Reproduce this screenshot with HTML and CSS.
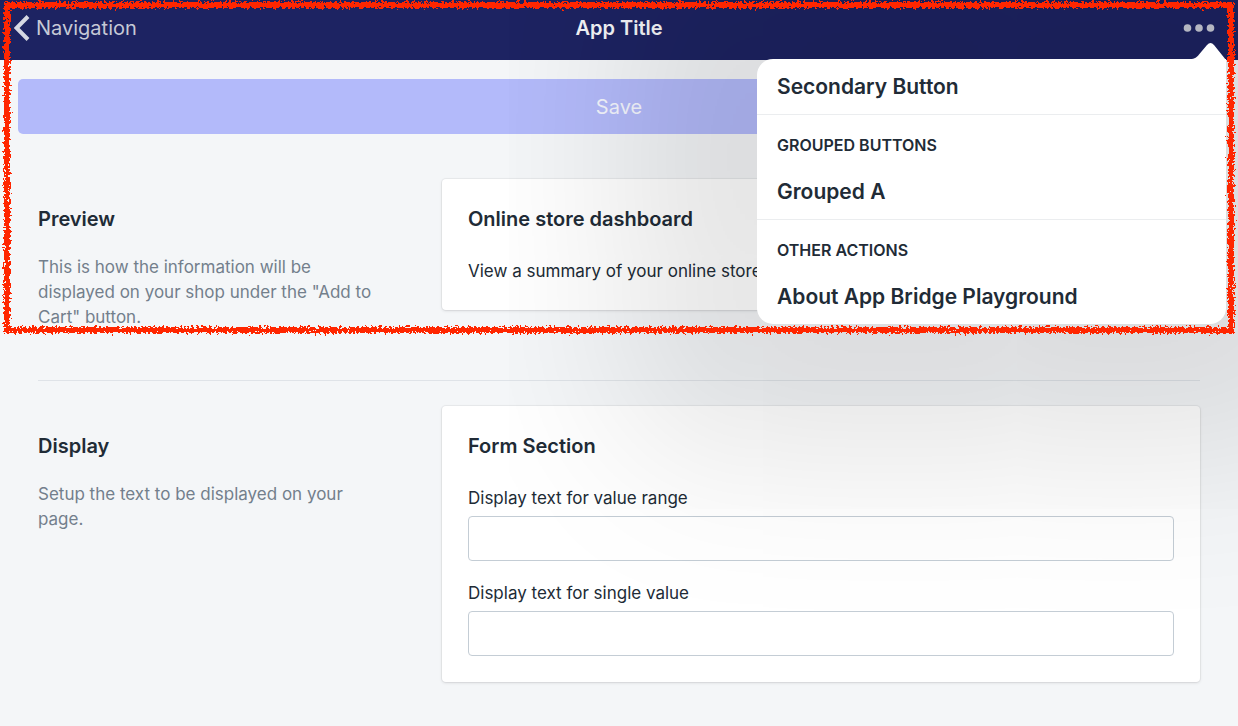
FILE: index.html
```html
<!DOCTYPE html>
<html lang="en">
<head>
<meta charset="utf-8">
<meta name="viewport" content="width=device-width, initial-scale=1">
<title>App Title</title>
<link rel="stylesheet" href="styles.css">
</head>
<body>
<div class="app">
  <header class="topbar">
    <a class="back" href="#">
      <svg class="back-icon" viewBox="0 0 16 28" aria-hidden="true"><path d="M14 2.5 2.6 14 14 25.5"/></svg>
      <span>Navigation</span>
    </a>
    <h1 class="title">App Title</h1>
    <div class="actions">
      <button class="more" type="button" aria-label="More actions" aria-expanded="true">
        <svg class="more-icon" viewBox="0 0 32 8" aria-hidden="true"><circle cx="4.5" cy="4" r="3.8"/><circle cx="16" cy="4" r="3.8"/><circle cx="27.5" cy="4" r="3.8"/></svg>
      </button>
      <div class="menu">
        <svg class="menu-arrow" viewBox="0 0 40 20" aria-hidden="true"><path d="M0 17C5 17 7 15 9 12.5L17 3Q20.500 -1 24 3L36 18V20H0Z"/></svg>
        <section class="menu-group">
          <button class="menu-item" type="button">Secondary Button</button>
        </section>
        <section class="menu-group">
          <h2 class="menu-heading">GROUPED BUTTONS</h2>
          <button class="menu-item" type="button">Grouped A</button>
        </section>
        <section class="menu-group">
          <h2 class="menu-heading">OTHER ACTIONS</h2>
          <button class="menu-item" type="button">About App Bridge Playground</button>
        </section>
      </div>
    </div>
  </header>

  <main>
    <div class="save-row"><button class="save" type="button">Save</button></div>

    <div class="sections">
      <section class="section">
        <div class="intro">
          <h2 class="heading">Preview</h2>
          <p class="description">This is how the information will be displayed on your shop under the "Add to Cart" button.</p>
        </div>
        <div class="card">
          <h3 class="heading">Online store dashboard</h3>
          <p class="card-text">View a summary of your online store</p>
        </div>
      </section>

      <section class="section section-divided">
        <div class="intro">
          <h2 class="heading">Display</h2>
          <p class="description">Setup the text to be displayed on your page.</p>
        </div>
        <form class="card">
          <h3 class="heading">Form Section</h3>
          <div class="fields">
            <div class="field">
              <label for="range">Display text for value range</label>
              <input id="range" type="text">
            </div>
            <div class="field">
              <label for="single">Display text for single value</label>
              <input id="single" type="text">
            </div>
          </div>
        </form>
      </section>
    </div>
  </main>

  <svg class="marker" aria-hidden="true">
    <defs>
      <filter id="crayon" x="-10" y="-10" width="105%" height="110%" filterUnits="userSpaceOnUse">
        <feTurbulence type="fractalNoise" baseFrequency="0.4" numOctaves="3" seed="4" result="noise"/>
        <feDisplacementMap in="SourceGraphic" in2="noise" scale="8" xChannelSelector="R" yChannelSelector="G"/>
      </filter>
    </defs>
    <rect class="marker-line" x="5" y="5" width="100%" height="325"/>
  </svg>
</div>
</body>
</html>
```
FILE: styles.css
```css
* { box-sizing: border-box; }

body {
  margin: 0;
  background: #f4f6f8;
  color: #212b36;
  font-family: Inter, "Liberation Sans", sans-serif;
}

h1, h2, h3, p { margin: 0; }

button { border: 0; font: inherit; cursor: pointer; }

.app {
  position: relative;
  min-height: 100vh;
  overflow: hidden;
}

.topbar {
  display: grid;
  grid-template-columns: 1fr auto 1fr;
  height: 60px;
  padding: 0 14px 5px;
  align-items: center;
  background: #1d2362;
}

.back {
  display: flex;
  align-items: center;
  gap: 6px;
  color: #c6c9d6;
  font-size: 20px;
  text-decoration: none;
}

.back-icon {
  width: 16px;
  height: 28px;
  fill: none;
  stroke: #d6d8e3;
  stroke-width: 4;
}

.title { color: #f4f5f8; font-size: 20px; font-weight: 600; }

.actions { display: flex; justify-content: flex-end; }

.more { display: flex; padding: 8px 9px; background: none; }

.more-icon { width: 32px; height: 8px; fill: #c7c9d6; }

.menu {
  position: absolute;
  z-index: 2;
  top: 59px;
  right: 12px;
  width: 469px;
  border-radius: 16px 0 16px 16px;
  background: #fff;
  box-shadow: 0 0 180px 132px rgba(0, 0, 0, 0.11);
}

.menu-arrow {
  position: absolute;
  top: -17px;
  right: -4px;
  width: 40px;
  height: 20px;
  fill: #fff;
}

.menu-group + .menu-group { border-top: 1px solid #ebedef; }

.menu-heading {
  padding: 18px 20px 0;
  font-size: 16px;
  font-weight: 600;
  line-height: 24px;
}

.menu-item {
  display: block;
  width: 100%;
  padding: 15px 20px 14px;
  background: none;
  color: #212b36;
  font-size: 21px;
  font-weight: 600;
  line-height: 26px;
  text-align: left;
}

.menu-heading + .menu-item { padding: 22px 20px 14px; }

.save-row { padding: 19px 18px 45px; }

.save {
  width: 100%;
  height: 55px;
  border-radius: 5px;
  background: #b3bafa;
  color: #f4f6fe;
  font-size: 20px;
}

.sections { padding: 0 38px 44px; }

.section {
  display: grid;
  grid-template-columns: 1fr 2fr;
  gap: 25px;
  align-items: start;
}

.section-divided {
  margin-top: 50px;
  padding-top: 25px;
  border-top: 1px solid #dfe3e8;
}

.intro { padding: 26px 25px 0 0; }

.heading { font-size: 20px; font-weight: 600; line-height: 28px; }

.description {
  margin-top: 22px;
  color: #737f8c;
  font-size: 17px;
  line-height: 25px;
}

.card {
  padding: 26px;
  border-radius: 4px;
  background: #fff;
  box-shadow: 0 0 0 1px rgba(63, 63, 68, 0.05), 0 1px 3px rgba(63, 63, 68, 0.15);
}

.card-text {
  margin-top: 26px;
  font-size: 17px;
  line-height: 25px;
}

.fields { display: grid; gap: 20px; margin-top: 26px; }

.field { display: grid; gap: 5px; }

.field label { font-size: 17px; line-height: 25px; }

.field input {
  width: 100%;
  height: 45px;
  padding: 0 14px;
  border: 1px solid #c4cdd5;
  border-radius: 4px;
  background: transparent;
  font: inherit;
  font-size: 17px;
}

.marker {
  position: absolute;
  z-index: 3;
  top: 0;
  left: 2px;
  width: calc(100% - 14px);
  height: 340px;
  overflow: visible;
  pointer-events: none;
}

.marker-line {
  fill: none;
  stroke: #ff2600;
  stroke-width: 6;
  filter: url(#crayon);
}
```
